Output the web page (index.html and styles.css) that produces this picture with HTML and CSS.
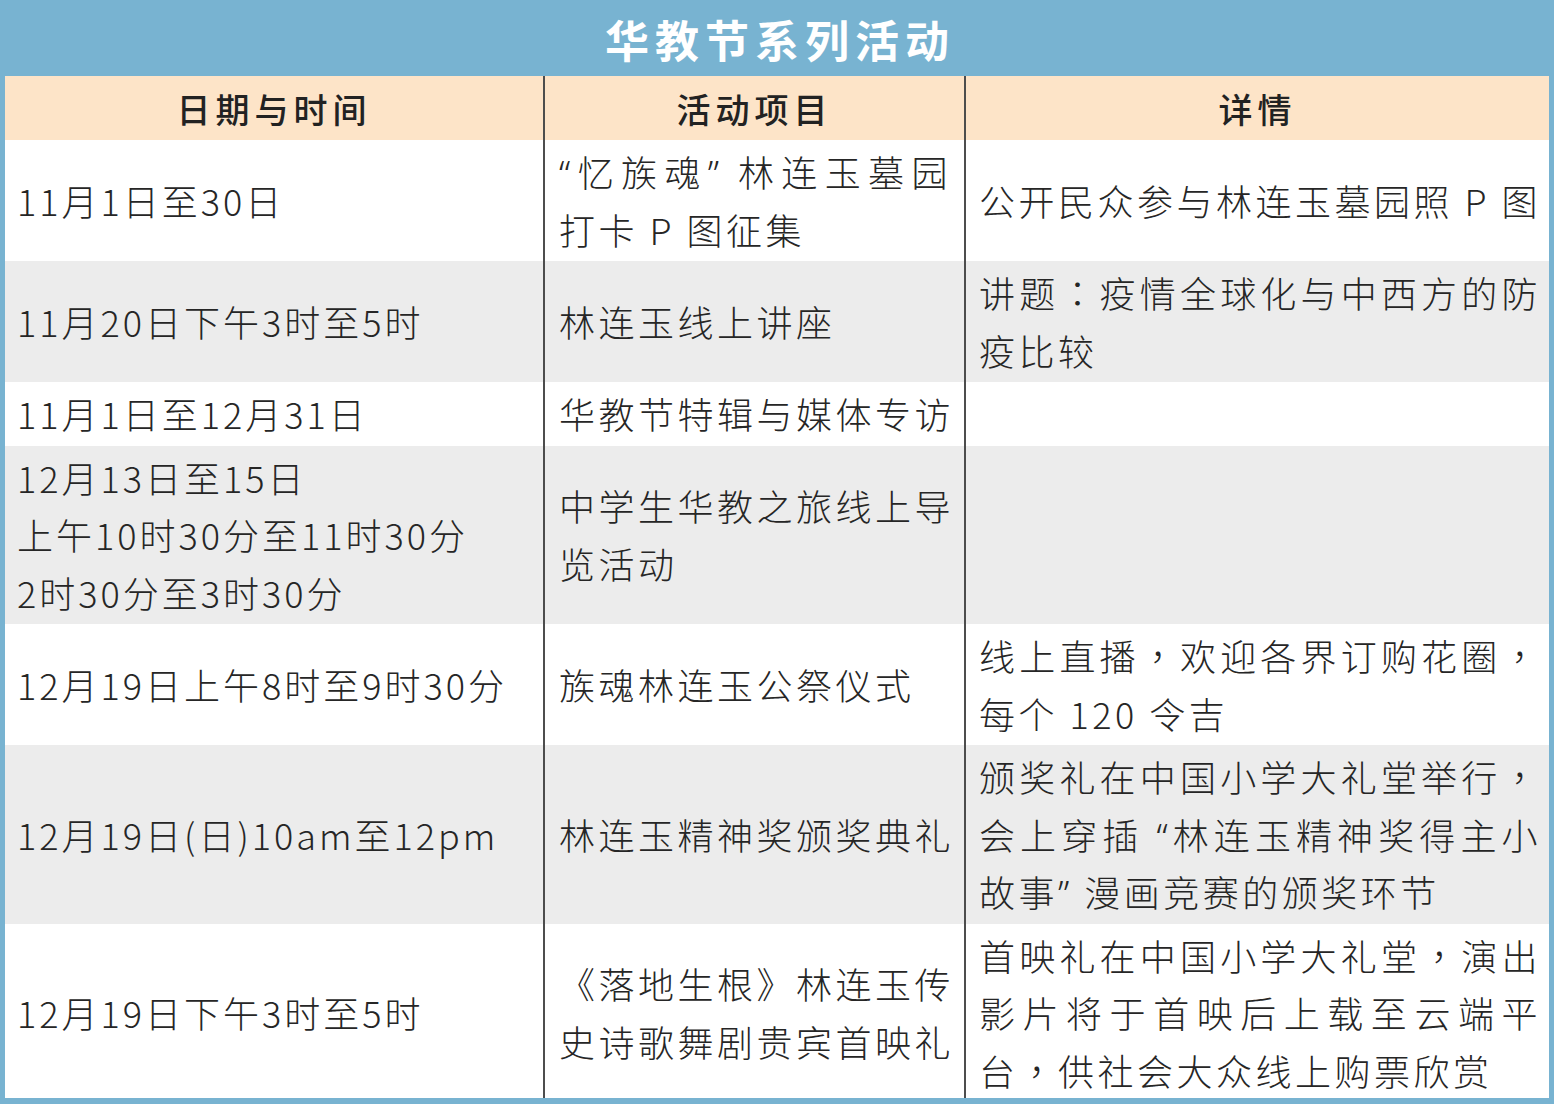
FILE: index.html
```html
<!DOCTYPE html>
<html lang="zh-CN">
<head>
<meta charset="utf-8">
<title>华教节系列活动</title>
<link rel="stylesheet" href="styles.css">
</head>
<body>
<div class="page">
  <h1 class="title">华教节系列活动</h1>
  <div class="sheet">
    <table class="schedule">
      <colgroup>
        <col class="c-date">
        <col class="c-act">
        <col class="c-info">
      </colgroup>
      <thead>
        <tr>
          <th>日期与时间</th>
          <th>活动项目</th>
          <th>详情</th>
        </tr>
      </thead>
      <tbody>
        <tr class="odd">
          <td class="date">11月1日至30日</td>
          <td class="act"><span class="ln full"><span class="q">“</span>忆族魂<span class="q">”</span> 林连玉墓园</span><span class="ln">打卡 P 图征集</span></td>
          <td class="info"><span class="ln full">公开民众参与林连玉墓园照 P 图</span></td>
        </tr>
        <tr class="even">
          <td class="date">11月20日下午3时至5时</td>
          <td class="act"><span class="ln">林连玉线上讲座</span></td>
          <td class="info"><span class="ln full">讲题<span class="pc" lang="zh-Hant-TW">：</span>疫情全球化与中西方的防</span><span class="ln">疫比较</span></td>
        </tr>
        <tr class="odd">
          <td class="date">11月1日至12月31日</td>
          <td class="act"><span class="ln full">华教节特辑与媒体专访</span></td>
          <td class="info"></td>
        </tr>
        <tr class="even">
          <td class="date"><span class="ln">12月13日至15日</span><span class="ln">上午10时30分至11时30分</span><span class="ln">2时30分至3时30分</span></td>
          <td class="act"><span class="ln full">中学生华教之旅线上导</span><span class="ln">览活动</span></td>
          <td class="info"></td>
        </tr>
        <tr class="odd">
          <td class="date">12月19日上午8时至9时30分</td>
          <td class="act"><span class="ln">族魂林连玉公祭仪式</span></td>
          <td class="info"><span class="ln full">线上直播<span class="pc" lang="zh-Hant-TW">，</span>欢迎各界订购花圈<span class="pc" lang="zh-Hant-TW">，</span></span><span class="ln">每个 120 令吉</span></td>
        </tr>
        <tr class="even">
          <td class="date">12月19日(日)10am至12pm</td>
          <td class="act"><span class="ln full">林连玉精神奖颁奖典礼</span></td>
          <td class="info"><span class="ln full">颁奖礼在中国小学大礼堂举行<span class="pc" lang="zh-Hant-TW">，</span></span><span class="ln full">会上穿插 <span class="q">“</span>林连玉精神奖得主小</span><span class="ln">故事<span class="q">”</span> 漫画竞赛的颁奖环节</span></td>
        </tr>
        <tr class="odd">
          <td class="date">12月19日下午3时至5时</td>
          <td class="act"><span class="ln full">《落地生根》林连玉传</span><span class="ln full">史诗歌舞剧贵宾首映礼</span></td>
          <td class="info"><span class="ln full">首映礼在中国小学大礼堂<span class="pc" lang="zh-Hant-TW">，</span>演出</span><span class="ln full">影片将于首映后上载至云端平</span><span class="ln">台<span class="pc" lang="zh-Hant-TW">，</span>供社会大众线上购票欣赏</span></td>
        </tr>
      </tbody>
    </table>
  </div>
</div>
</body>
</html>
```
FILE: styles.css
```css
html, body {
  margin: 0;
  padding: 0;
}

body {
  background: #78b3d1;
  width: 1554px;
  height: 1104px;
  overflow: hidden;
  font-family: "Noto Sans CJK SC", "Noto Sans", sans-serif;
  color: #262626;
}

.page {
  display: flex;
  flex-direction: column;
  height: 1098px;
}

.title {
  margin: 0;
  height: 76px;
  display: flex;
  align-items: center;
  justify-content: center;
  color: #ffffff;
  font-size: 44px;
  font-weight: 700;
  letter-spacing: 6px;
  padding-left: 6px;
  padding-top: 2px;
  box-sizing: border-box;
}

.sheet {
  flex: 1;
  margin: 0 5px;
  overflow: hidden;
  background: #ffffff;
}

.schedule {
  width: 1544px;
  border-collapse: collapse;
  table-layout: fixed;
}

.c-date { width: 539px; }
.c-act { width: 421px; }
.c-info { width: 584px; }

.schedule th {
  height: 64px;
  padding: 0;
  background: #fde4c8;
  font-size: 34px;
  font-weight: 500;
  letter-spacing: 5px;
  color: #222222;
  text-align: center;
  vertical-align: middle;
}

.schedule th + th,
.schedule td + td {
  border-left: 2px solid #4d4d4d;
}

.schedule td {
  font-size: 36px;
  font-weight: 300;
  line-height: 57.5px;
  vertical-align: middle;
  padding: 3px 0;
  white-space: nowrap;
}

.odd td { background: #ffffff; }
.even td { background: #ececec; }

.schedule td.date {
  padding-left: 12px;
  letter-spacing: 3px;
}

.schedule td.act {
  padding-left: 14px;
  padding-right: 13px;
  letter-spacing: 3.5px;
}

.schedule td.info {
  padding-left: 13px;
  padding-right: 8px;
  letter-spacing: 3.5px;
}

.ln {
  display: block;
}

.ln.full {
  text-align: justify;
  text-align-last: justify;
}

.pc {
  font-family: "Noto Sans CJK TC", "Noto Sans CJK SC", sans-serif;
  line-height: 1;
}

.q {
  font-family: "Noto Sans", "Liberation Sans", sans-serif;
  font-weight: 300;
  line-height: 1;
}
```
